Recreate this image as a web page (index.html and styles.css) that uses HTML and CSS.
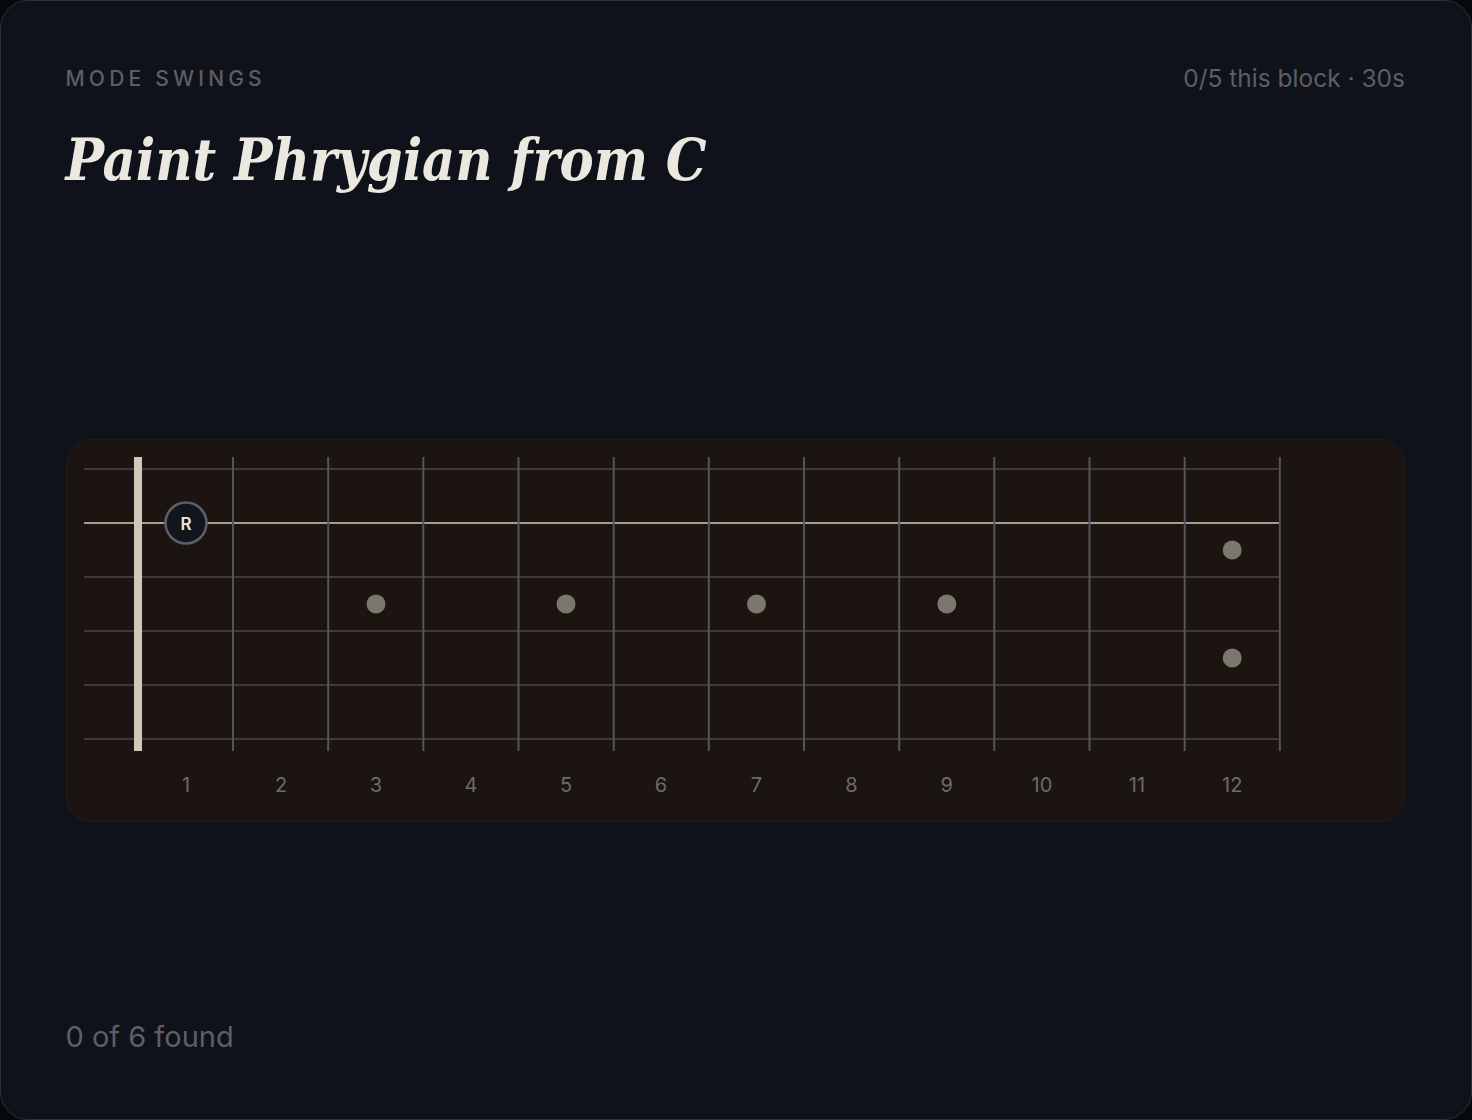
FILE: index.html
```html
<!DOCTYPE html>
<html>
<head>
<meta charset="utf-8">
<link rel="stylesheet" href="styles.css">
</head>
<body>
<div class="card">
  <div class="header">
    <div class="eyebrow">MODE SWINGS</div>
    <div class="meta">0/5 this block · 30s</div>
  </div>
  <h1 class="title">Paint Phrygian from C</h1>
  <div class="board">
    <svg class="neck" width="1339" height="383" viewBox="0 0 1339 383">
      <g class="strings">
        <line x1="18" y1="30" x2="1214" y2="30"/>
        <line class="hot" x1="18" y1="84" x2="1214" y2="84"/>
        <line x1="18" y1="138" x2="1214" y2="138"/>
        <line x1="18" y1="192" x2="1214" y2="192"/>
        <line x1="18" y1="246" x2="1214" y2="246"/>
        <line x1="18" y1="300" x2="1214" y2="300"/>
      </g>
      <g class="frets">
        <line x1="167" y1="18" x2="167" y2="312"/>
        <line x1="262.2" y1="18" x2="262.2" y2="312"/>
        <line x1="357.3" y1="18" x2="357.3" y2="312"/>
        <line x1="452.5" y1="18" x2="452.5" y2="312"/>
        <line x1="547.7" y1="18" x2="547.7" y2="312"/>
        <line x1="642.8" y1="18" x2="642.8" y2="312"/>
        <line x1="738" y1="18" x2="738" y2="312"/>
        <line x1="833.2" y1="18" x2="833.2" y2="312"/>
        <line x1="928.3" y1="18" x2="928.3" y2="312"/>
        <line x1="1023.5" y1="18" x2="1023.5" y2="312"/>
        <line x1="1118.7" y1="18" x2="1118.7" y2="312"/>
        <line x1="1213.8" y1="18" x2="1213.8" y2="312"/>
      </g>
      <rect class="nut" x="68" y="18" width="8" height="294"/>
      <g class="inlays">
        <circle cx="310" cy="165" r="9.5"/>
        <circle cx="500" cy="165" r="9.5"/>
        <circle cx="690.5" cy="165" r="9.5"/>
        <circle cx="880.8" cy="165" r="9.5"/>
        <circle cx="1166.2" cy="111" r="9.5"/>
        <circle cx="1166.2" cy="219" r="9.5"/>
      </g>
      <circle class="root" cx="120" cy="84" r="20.5"/>
      <text class="root-label" x="120" y="85">R</text>
      <g class="nums">
        <text x="120" y="346">1</text>
        <text x="215" y="346">2</text>
        <text x="310" y="346">3</text>
        <text x="405" y="346">4</text>
        <text x="500" y="346">5</text>
        <text x="595" y="346">6</text>
        <text x="690.5" y="346">7</text>
        <text x="785.5" y="346">8</text>
        <text x="880.8" y="346">9</text>
        <text x="976" y="346">10</text>
        <text x="1071" y="346">11</text>
        <text x="1166.2" y="346">12</text>
      </g>
    </svg>
  </div>
  <div class="footer">0 of 6 found</div>
</div>
</body>
</html>
```

FILE: styles.css
```css
html, body {
  margin: 0;
  padding: 0;
  background: #07090c;
}
.card {
  box-sizing: border-box;
  width: 1472px;
  height: 1120px;
  background: #0f121a;
  border: 1.5px solid #2f3238;
  border-radius: 28px;
  padding: 59px 66px 64px 64.5px;
  display: flex;
  flex-direction: column;
  font-family: Inter, "Noto Sans", sans-serif;
}
.header {
  display: flex;
  justify-content: space-between;
  align-items: center;
  height: 36px;
}
.eyebrow {
  font-size: 21px;
  letter-spacing: 4.2px;
  color: #5b5e66;
  font-weight: 500;
}
.meta {
  font-size: 24.5px;
  color: #5b5e66;
}
.title {
  margin: 28px 0 0 0;
  font-family: "DejaVu Serif Condensed", "DejaVu Serif", serif;
  font-stretch: condensed;
  font-style: italic;
  font-weight: 700;
  font-size: 57px;
  line-height: 72px;
  color: #ebe8df;
}
.board {
  margin-top: 243px;
  width: 1339px;
  height: 383px;
  box-sizing: border-box;
  background: #1b1410;
  border: 1px solid #221a15;
  border-radius: 24px;
  overflow: hidden;
}
.neck {
  display: block;
  margin: -1px;
}
.strings line {
  stroke: #3f3a35;
  stroke-width: 2;
}
.strings line.hot {
  stroke: #a69d8d;
  stroke-width: 2;
}
.frets line {
  stroke: #52545c;
  stroke-width: 2;
}
.nut {
  fill: #cfc7b8;
}
.inlays circle {
  fill: #7c776d;
}
.root {
  fill: #12151c;
  stroke: #5b5f68;
  stroke-width: 2.5;
}
.root-label {
  font-family: Inter, sans-serif;
  font-size: 17px;
  font-weight: 600;
  fill: #ebe9e3;
  text-anchor: middle;
  dominant-baseline: central;
}
.nums text {
  font-family: Inter, sans-serif;
  font-size: 20px;
  fill: #6a6a71;
  text-anchor: middle;
  dominant-baseline: central;
}
.footer {
  margin-top: auto;
  font-size: 29px;
  line-height: 36px;
  color: #5c5f67;
}
```
